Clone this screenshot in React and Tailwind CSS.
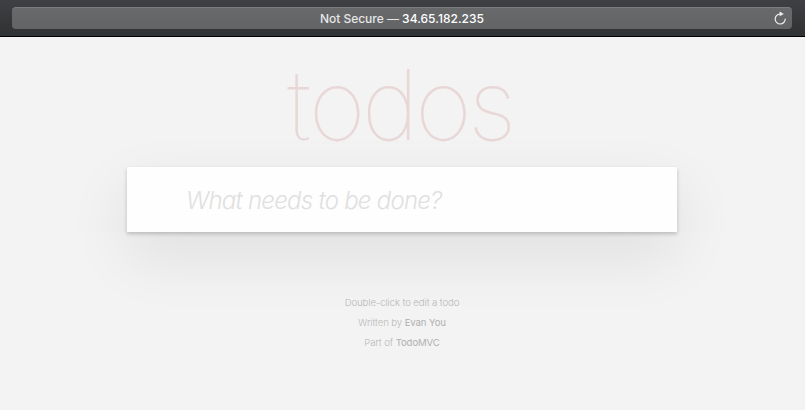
function ReloadIcon() {
  return (
    <svg className="mb-0.5 h-[14px] w-[14px]" viewBox="0 0 14 14" fill="none">
      <path d="M6.9 3A5 5 0 1 0 12.2 8" stroke="#f0f0f0" strokeWidth="1.2" strokeLinecap="round" />
      <path d="M6.6 0.5V5.3L10.8 2.9Z" fill="#f0f0f0" />
    </svg>
  );
}

function BrowserBar() {
  return (
    <div className="h-[37px] border-b border-black bg-linear-to-b from-[#3f4043] to-[#303133] pt-[7px] pr-[13px] pl-3">
      <div className="flex h-[22px] items-center rounded-[4px] border-t border-[#7c7d7f] bg-linear-to-b from-[#68696b] to-[#626466] pr-[5px] pl-[19px] font-['Inter']">
        <div className="flex-1 text-center text-[12px] leading-[21px] font-medium tracking-[-0.02px] whitespace-nowrap text-[#e6e6e6]">
          Not Secure — <span className="tracking-[0.04px] text-white">34.65.182.235</span>
        </div>
        <ReloadIcon />
      </div>
    </div>
  );
}

export default function App() {
  return (
    <div className="h-[410px] overflow-hidden bg-[#f3f3f3]">
      <BrowserBar />
      <main className="mr-[128px] ml-[127px] flex flex-col">
        <h1 className="h-[130px] pt-[19px] pr-[4px] text-center font-['Inter'] text-[98px] leading-[98px] font-thin tracking-[-3.7px] text-[#e9d7d7] [-webkit-text-stroke:0.2px_#e9d7d7]">
          <span className="tracking-[-2.2px]">t</span>odos
        </h1>
        <div className="relative h-[65px]">
          <div className="absolute inset-0 shadow-[0_25px_60px_4px_rgba(0,0,0,0.08)] [clip-path:inset(-80px_-90px_0_-90px)]" />
          <div className="absolute inset-0 shadow-[0_27px_60px_rgba(0,0,0,0.078)] [clip-path:inset(100%_-90px_-110px_-90px)]" />
          <input
            className="relative h-[65px] w-full bg-[#fefefe] pt-0.5 pr-4 pl-[59px] font-['Inter'] text-[24px] font-light tracking-[-0.75px] italic shadow-[0_2px_4px_rgba(0,0,0,0.2)] outline-none placeholder:text-[#e0e0e0]"
            placeholder="What needs to be done?"
          />
        </div>
        <footer className="pt-[61px] text-center font-['Inter'] text-[9.6px] leading-[20px] font-light tracking-[-0.1px] text-[#b9b9b9]">
          <p>Double-click to edit a todo</p>
          <p>Written by <a className="font-normal text-[#b0b0b0]">Evan You</a></p>
          <p>Part of <a className="font-normal text-[#b0b0b0]">TodoMVC</a></p>
        </footer>
      </main>
    </div>
  );
}
